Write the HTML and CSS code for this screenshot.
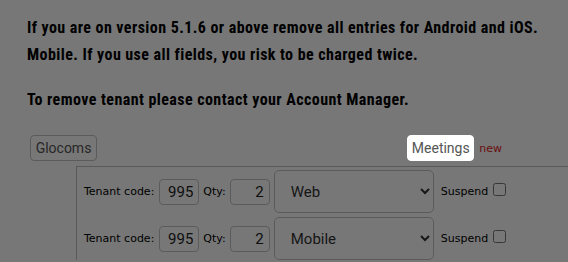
FILE: index.html
```html
<!DOCTYPE html>
<html lang="en">
<head>
  <meta charset="UTF-8">
  <meta name="viewport" content="width=device-width, initial-scale=1.0">
  <title>Tenant Settings</title>
  <link rel="stylesheet" href="styles.css">
</head>
<body>

<div class="notice">
  <p>If you are on version 5.1.6 or above remove all entries for Android and iOS. Mobile. If you use all fields, you risk to be charged twice.</p>
  <p>To remove tenant please contact your Account Manager.</p>
</div>

<div class="tab-bar">
  <button class="tab">Glocoms</button>
  <div class="tab-group">
    <button class="tab highlight">Meetings</button>
    <span class="badge-new">new</span>
  </div>
</div>

<div class="panel">
  <div class="tenant-row">
    <span class="field-label">Tenant code:</span>
    <input class="num-input" type="text" value="995">
    <span class="field-label">Qty:</span>
    <input class="num-input" type="text" value="2">
    <select class="platform">
      <option selected>Web</option>
      <option>Mobile</option>
    </select>
    <label class="suspend">Suspend <input type="checkbox"></label>
  </div>
  <div class="tenant-row">
    <span class="field-label">Tenant code:</span>
    <input class="num-input" type="text" value="995">
    <span class="field-label">Qty:</span>
    <input class="num-input" type="text" value="2">
    <select class="platform">
      <option>Web</option>
      <option selected>Mobile</option>
    </select>
    <label class="suspend">Suspend <input type="checkbox"></label>
  </div>
</div>

<!-- tour overlay, the highlighted tab sits above it -->
<div class="overlay"></div>

</body>
</html>
```

FILE: styles.css
```css
body {
  margin: 0;
  padding: 0;
  background-color: #fff;
  font-family: Roboto, sans-serif;
  color: #000;
  overflow: hidden;
}
.notice {
  margin-left: 27px;
  padding-top: 14px;
}
.notice p {
  margin: 0 0 18px 0;
  font-family: "Liberation Sans Narrow", "Roboto Condensed", Roboto, sans-serif;
  font-weight: 700;
  font-size: 16px;
  line-height: 27px;
  letter-spacing: 0.43px;
}
.tab-bar {
  display: flex;
  justify-content: space-between;
  align-items: center;
  width: 472px;
  margin-left: 30px;
  margin-top: 22px;
}
.tab-group {
  display: flex;
  align-items: center;
  gap: 5px;
}
.tab {
  font-family: Roboto, sans-serif;
  font-size: 14px;
  color: #555;
  background-color: #fff;
  border: 1px solid #c4c4c4;
  border-radius: 4px;
  height: 26px;
  width: 67px;
  padding: 0;
}
.highlight {
  position: relative;
  z-index: 20;
  border-color: #fff;
}
.badge-new {
  font-family: "DejaVu Sans", sans-serif;
  font-size: 11px;
  color: #e41d1d;
}
.panel {
  margin-top: 5px;
  margin-left: 76px;
  border-top: 1px solid #c0c0c0;
  border-left: 1px solid #c0c0c0;
  padding: 3px 0 0 7px;
}
.tenant-row {
  display: flex;
  align-items: center;
  gap: 4px;
  height: 43px;
  margin-bottom: 4px;
}
.field-label {
  font-family: "DejaVu Sans", sans-serif;
  font-size: 11px;
}
.field-label:first-child {
  margin-right: 1px;
}
.num-input {
  box-sizing: border-box;
  width: 40px;
  height: 26px;
  border: 1px solid #c4c4c4;
  border-radius: 4px;
  padding: 0 5px 0 0;
  text-align: right;
  font-family: Roboto, sans-serif;
  font-size: 15px;
  color: #222;
}
.platform {
  box-sizing: border-box;
  width: 160px;
  height: 43px;
  border: 1px solid #c4c4c4;
  border-radius: 5px;
  background-color: #fff;
  padding-left: 12px;
  font-family: Roboto, sans-serif;
  font-size: 15px;
  color: #333;
}
.suspend {
  display: flex;
  align-items: center;
  gap: 5px;
  margin-left: 3px;
  font-family: "DejaVu Sans", sans-serif;
  font-size: 11px;
}
.suspend input {
  margin: 0 0 4px 0;
  width: 13px;
  height: 13px;
}
.overlay {
  position: fixed;
  inset: 0;
  background-color: rgba(0, 0, 0, 0.535);
  z-index: 10;
}
```
